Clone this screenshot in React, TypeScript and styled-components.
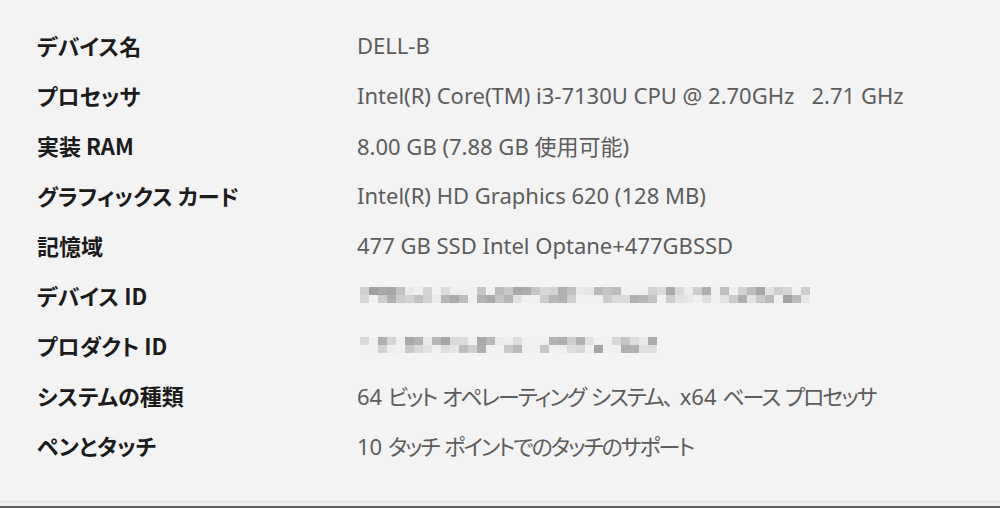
import styled, { createGlobalStyle } from "styled-components";

const GlobalStyle = createGlobalStyle`
  html, body {
    margin: 0;
    padding: 0;
    background: #f3f3f3;
  }
`;

interface Spec {
  label: string;
  value?: string;
  blur?: number;
}

const specs: Spec[] = [
  { label: "デバイス名", value: "DELL-B" },
  { label: "プロセッサ", value: "Intel(R) Core(TM) i3-7130U CPU @ 2.70GHz\u00a0\u00a0\u00a02.71 GHz" },
  { label: "実装 RAM", value: "8.00 GB (7.88 GB 使用可能)" },
  { label: "グラフィックス カード", value: "Intel(R) HD Graphics 620 (128 MB)" },
  { label: "記憶域", value: "477 GB SSD Intel Optane+477GBSSD" },
  { label: "デバイス ID", blur: 50 },
  { label: "プロダクト ID", blur: 33 },
  { label: "システムの種類", value: "64 ビット オペレーティング システム、x64 ベース プロセッサ" },
  { label: "ペンとタッチ", value: "10 タッチ ポイントでのタッチのサポート" },
];

// deterministic gray shades for the pixelated (blurred) ids
const shade = (i: number, row: number, seed: number) => {
  const n = Math.sin(i * 12.9898 + row * 78.233 + seed) * 43758.5453;
  const f = n - Math.floor(n);
  const v = f < 0.3 ? 240 : Math.round(125 + f * 115);
  return `rgb(${v},${v},${v})`;
};

const Mosaic = ({ cells, seed }: { cells: number; seed: number }) => (
  <MosaicGrid $cells={cells}>
    {[0, 1].map((row) =>
      Array.from({ length: cells }, (_, i) => (
        <Cell key={`${row}-${i}`} style={{ background: shade(i, row, seed) }} />
      ))
    )}
  </MosaicGrid>
);

// kana in the Windows UI font is narrower than Noto's, so kana runs get tightened
const ValueText = ({ text }: { text: string }) => (
  <Value>
    {text.split(/([\u3040-\u30ff]+|、)/).map((part, i) => {
      if (part === "、") return <Comma key={i}>{part}</Comma>;
      return /[\u3040-\u30ff]/.test(part) ? <Kana key={i}>{part}</Kana> : part;
    })}
  </Value>
);

const App = () => {
  return (
    <Page>
      <GlobalStyle />
      <SpecList>
        {specs.map((s, idx) => (
          <Row key={s.label}>
            <Label>{s.label}</Label>
            {s.blur ? <Mosaic cells={s.blur} seed={idx * 3.1} /> : <ValueText text={s.value ?? ""} />}
          </Row>
        ))}
      </SpecList>
      <Footer />
    </Page>
  );
};

const Page = styled.div`
  display: flex;
  flex-direction: column;
  width: 1000px;
  height: 508px;
  background: #f3f3f3;
  overflow: hidden;
`;

const SpecList = styled.div`
  flex: 1;
  display: flex;
  flex-direction: column;
  padding: 20px 0 0 37px;
`;

const Row = styled.div`
  display: grid;
  grid-template-columns: 320px 1fr;
  align-items: center;
  height: 50px;
`;

const Label = styled.div`
  font-family: "Noto Sans CJK JP", "Noto Sans", sans-serif;
  font-feature-settings: "palt";
  font-weight: 700;
  font-size: 22px;
  color: #1b1b1b;
  white-space: nowrap;
`;

const Value = styled.div`
  font-family: "Noto Sans", "Noto Sans CJK JP", sans-serif;
  font-feature-settings: "palt";
  font-size: 22px;
  color: #5c5c5c;
  white-space: nowrap;
`;

const Kana = styled.span`
  letter-spacing: -2px;
`;

const Comma = styled.span`
  margin-right: 6px;
`;

const MosaicGrid = styled.div<{ $cells: number }>`
  display: grid;
  grid-template-columns: repeat(${(p) => p.$cells}, 9px);
  grid-auto-rows: 8px;
  margin-left: 3px;
  filter: blur(0.6px);
`;

const Cell = styled.span`
  display: block;
`;

const Footer = styled.div`
  height: 7px;
  border-top: 1px solid #dedede;
  border-bottom: 2px solid #5e5e5e;
  box-sizing: border-box;
  background: #ededed;
`;

export default App;
